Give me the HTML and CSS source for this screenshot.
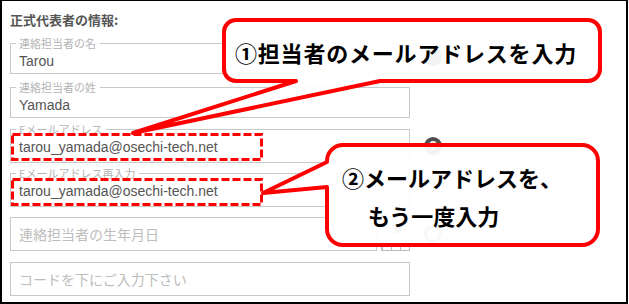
FILE: index.html
```html
<!DOCTYPE html>
<html lang="ja">
<head>
<meta charset="utf-8">
<title>正式代表者の情報</title>
<link rel="stylesheet" href="styles.css">
</head>
<body>
<div class="frame">
  <h2 class="title">正式代表者の情報:</h2>
  <div class="fields">
    <div class="row row--name-first">
      <fieldset class="fs"><legend>連絡担当者の名</legend><div class="value">Tarou</div></fieldset>
      <span class="help help--hidden"></span>
    </div>
    <div class="row row--name">
      <fieldset class="fs"><legend>連絡担当者の姓</legend><div class="value">Yamada</div></fieldset>
    </div>
    <div class="row row--email-first">
      <fieldset class="fs fs--email"><legend>Eメールアドレス</legend><div class="value">tarou_yamada@osechi-tech.net</div></fieldset>
      <span class="help">?</span>
    </div>
    <div class="row row--email">
      <fieldset class="fs fs--email"><legend>Eメールアドレス再入力</legend><div class="value">tarou_yamada@osechi-tech.net</div></fieldset>
    </div>
    <div class="row row--plain">
      <div class="box box--date">連絡担当者の生年月日</div>
      <div class="cal"><span class="cal__dot"></span><span class="cal__cell"></span><span class="cal__cell"></span><span class="cal__cell"></span></div>
      <span class="help help--ring"></span>
    </div>
    <div class="row">
      <div class="box box--code">コードを下にご入力下さい</div>
    </div>
  </div>

  <svg class="marks" viewBox="0 0 629 304" width="629" height="304" aria-hidden="true">
    <rect class="dash" x="12.5" y="134.5" width="249" height="25"/>
    <rect class="dash" x="12.5" y="179.5" width="249" height="25"/>
    <path class="bubble" d="M236,20 H588 A12,12 0 0 1 600,32 V69 A12,12 0 0 1 588,81 H380 L133,133 L296,81 H236 A12,12 0 0 1 224,69 V32 A12,12 0 0 1 236,20 Z"/>
    <path class="bubble" d="M343,145 H582 A16,16 0 0 1 598,161 V229 A16,16 0 0 1 582,245 H343 A16,16 0 0 1 327,229 V187 L263,193 L327,162 V161 A16,16 0 0 1 343,145 Z"/>
  </svg>
  <div class="note note--1">①担当者のメールアドレスを入力</div>
  <div class="note note--2"><span class="note__line">②メールアドレスを、</span><span class="note__line note__line--indent">もう一度入力</span></div>
</div>
</body>
</html>
```

FILE: styles.css
```css
html, body {
  margin: 0;
  background: #fff;
}

.frame {
  position: relative;
  box-sizing: border-box;
  width: 628px;
  height: 304px;
  border: 2px solid #000;
  border-top-width: 1px;
  padding: 10px 0 0 8px;
  font-family: "Noto Sans CJK JP", "Liberation Sans", sans-serif;
  overflow: hidden;
}

.title {
  margin: 0 0 8px;
  font-size: 13px;
  line-height: 18px;
  font-weight: bold;
  color: #555;
}

.fields {
  display: flex;
  flex-direction: column;
}

.row {
  display: flex;
  align-items: flex-end;
}

.row--name-first { margin-bottom: 7px; }
.row--name { margin-bottom: 5px; }
.row--email-first { margin-bottom: 4px; }
.row--email { margin-bottom: 10px; }
.row--plain { margin-bottom: 11px; }

.fs {
  box-sizing: border-box;
  width: 400px;
  min-width: 0;
  margin: 0;
  padding: 0 8px;
  border: 1px solid #c8c8c8;
}

.fs legend {
  margin-left: -3px;
  padding: 0 4px 0 3px;
  font-size: 11px;
  line-height: 13px;
  color: #b4b4b4;
}

.fs--email {
  padding-bottom: 3px;
}

.value {
  height: 23px;
  line-height: 23px;
  font-family: "Liberation Sans", sans-serif;
  font-size: 14px;
  color: #555;
  white-space: nowrap;
}

.box {
  box-sizing: border-box;
  height: 34px;
  padding: 0 8px;
  border: 1px solid #c8c8c8;
  font-size: 14px;
  line-height: 32px;
  color: #bdbdbd;
}

.box--date { width: 367px; }
.box--code { width: 400px; }

.cal {
  position: relative;
  box-sizing: border-box;
  display: flex;
  width: 29px;
  height: 9px;
  margin-left: 4px;
  border: 1px solid #bbb;
  border-top: 0;
}

.cal__cell {
  flex: 1;
  border-left: 1px solid #bbb;
}

.cal__cell:first-of-type { border-left: 0; }

.cal__dot {
  position: absolute;
  left: 13px;
  top: -15px;
  width: 6px;
  height: 6px;
  background: #888;
}

.help {
  flex: none;
  width: 18px;
  height: 18px;
  margin: 0 0 8px 14px;
  border-radius: 50%;
  background: #4d4d4d;
  color: #fff;
  font: bold 13px/18px "Liberation Sans", sans-serif;
  text-align: center;
}

.help--hidden {
  background: #6a6a6a;
}

.help--ring {
  box-sizing: border-box;
  background: #fff;
  border: 3px solid #999;
}

.marks {
  position: absolute;
  left: -2px;
  top: -1px;
}

.dash {
  fill: none;
  stroke: #ff0000;
  stroke-width: 3;
  stroke-dasharray: 8 3;
}

.bubble {
  fill: #fff;
  fill-opacity: 0.93;
  stroke: #ff0000;
  stroke-width: 4;
  stroke-linejoin: round;
}

.note {
  position: absolute;
  color: #000;
  font-weight: bold;
  font-size: 22px;
  white-space: nowrap;
}

.note--1 {
  left: 233px;
  top: 36px;
  line-height: 30px;
  letter-spacing: 0.8px;
}

.note--2 {
  left: 340px;
  top: 157px;
  line-height: 38px;
}

.note__line {
  display: block;
}

.note__line--indent {
  padding-left: 26px;
}
```
